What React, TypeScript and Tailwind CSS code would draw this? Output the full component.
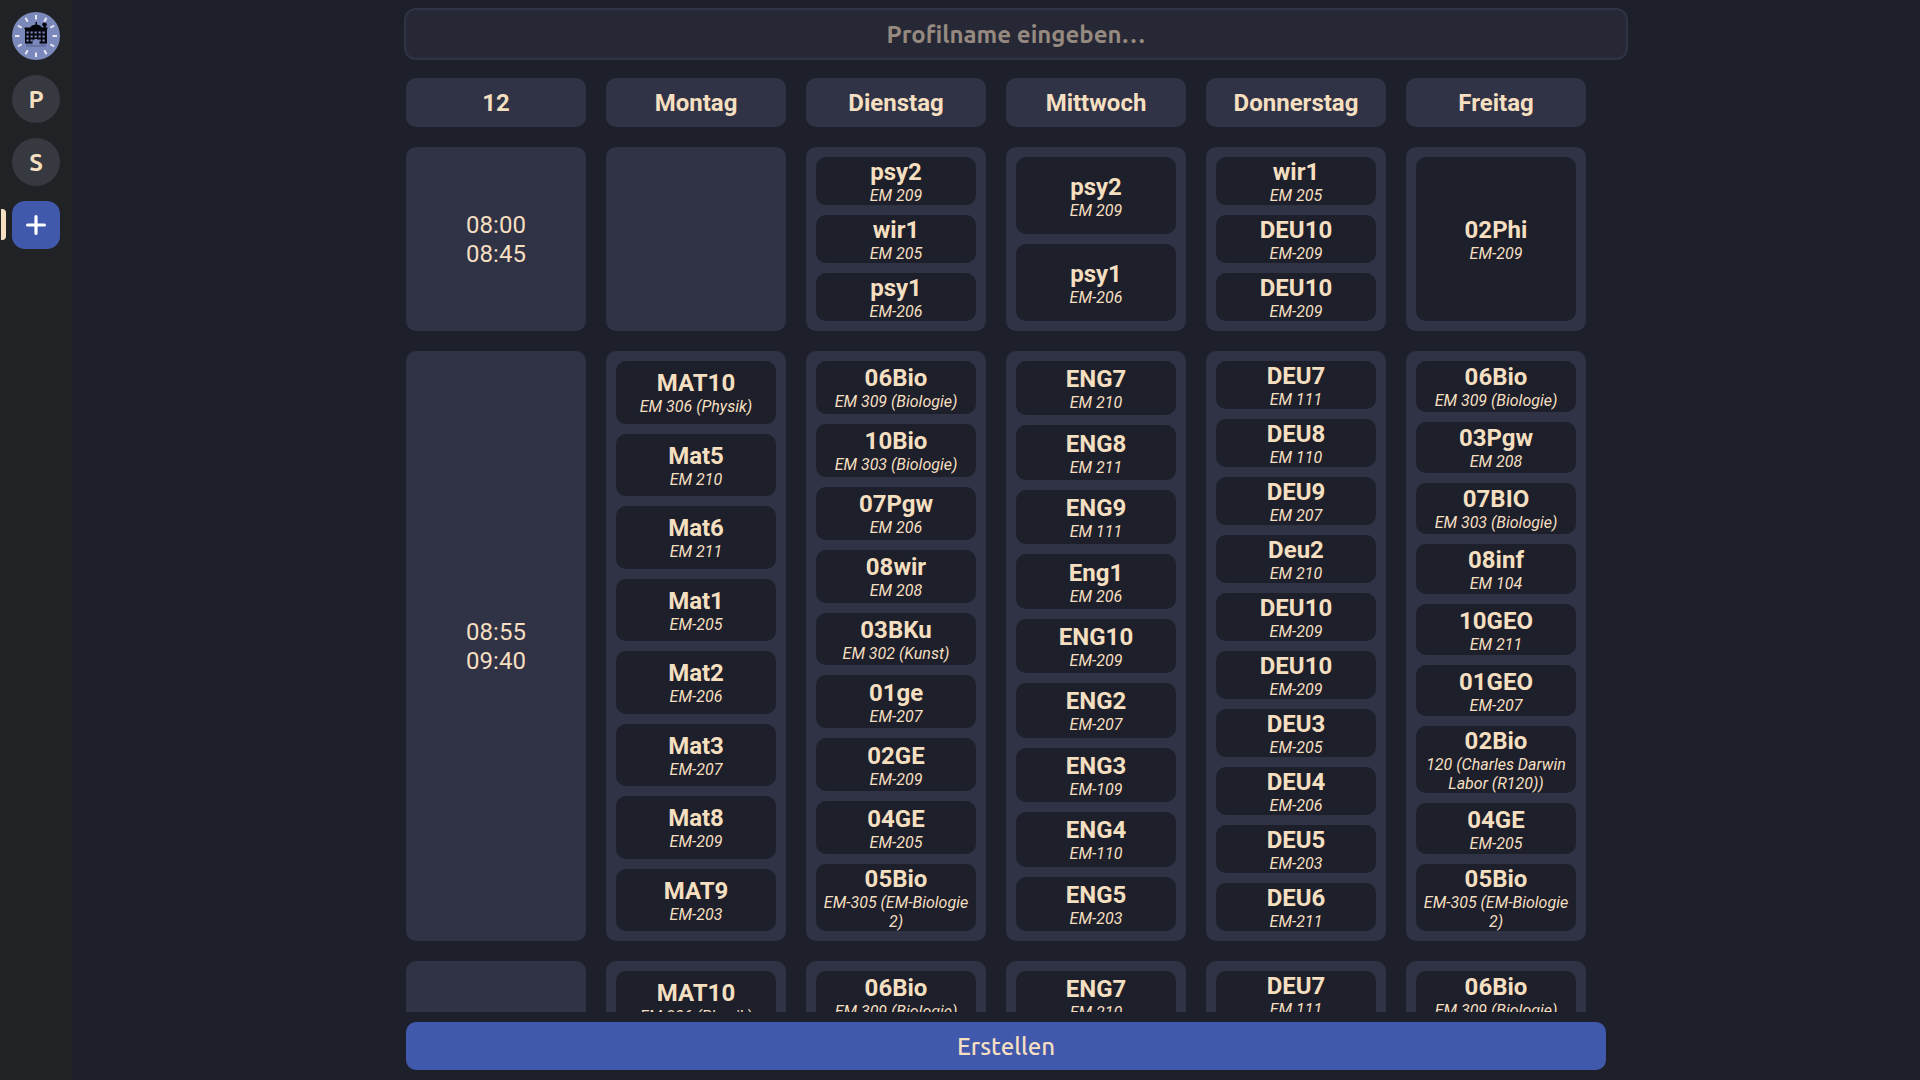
import React from "react";

type Course = [name: string, room: string];
type Slot = { times: string[]; days: Course[][] };

const DAYS = ["Montag", "Dienstag", "Mittwoch", "Donnerstag", "Freitag"];

const MAIN_COURSES: Course[][] = [
  [
    ["MAT10", "EM 306 (Physik)"],
    ["Mat5", "EM 210"],
    ["Mat6", "EM 211"],
    ["Mat1", "EM-205"],
    ["Mat2", "EM-206"],
    ["Mat3", "EM-207"],
    ["Mat8", "EM-209"],
    ["MAT9", "EM-203"],
  ],
  [
    ["06Bio", "EM 309 (Biologie)"],
    ["10Bio", "EM 303 (Biologie)"],
    ["07Pgw", "EM 206"],
    ["08wir", "EM 208"],
    ["03BKu", "EM 302 (Kunst)"],
    ["01ge", "EM-207"],
    ["02GE", "EM-209"],
    ["04GE", "EM-205"],
    ["05Bio", "EM-305 (EM-Biologie 2)"],
  ],
  [
    ["ENG7", "EM 210"],
    ["ENG8", "EM 211"],
    ["ENG9", "EM 111"],
    ["Eng1", "EM 206"],
    ["ENG10", "EM-209"],
    ["ENG2", "EM-207"],
    ["ENG3", "EM-109"],
    ["ENG4", "EM-110"],
    ["ENG5", "EM-203"],
  ],
  [
    ["DEU7", "EM 111"],
    ["DEU8", "EM 110"],
    ["DEU9", "EM 207"],
    ["Deu2", "EM 210"],
    ["DEU10", "EM-209"],
    ["DEU10", "EM-209"],
    ["DEU3", "EM-205"],
    ["DEU4", "EM-206"],
    ["DEU5", "EM-203"],
    ["DEU6", "EM-211"],
  ],
  [
    ["06Bio", "EM 309 (Biologie)"],
    ["03Pgw", "EM 208"],
    ["07BIO", "EM 303 (Biologie)"],
    ["08inf", "EM 104"],
    ["10GEO", "EM 211"],
    ["01GEO", "EM-207"],
    ["02Bio", "120 (Charles Darwin Labor (R120))"],
    ["04GE", "EM-205"],
    ["05Bio", "EM-305 (EM-Biologie 2)"],
  ],
];

const SLOTS: Slot[] = [
  {
    times: ["08:00", "08:45"],
    days: [
      [],
      [
        ["psy2", "EM 209"],
        ["wir1", "EM 205"],
        ["psy1", "EM-206"],
      ],
      [
        ["psy2", "EM 209"],
        ["psy1", "EM-206"],
      ],
      [
        ["wir1", "EM 205"],
        ["DEU10", "EM-209"],
        ["DEU10", "EM-209"],
      ],
      [["02Phi", "EM-209"]],
    ],
  },
  { times: ["08:55", "09:40"], days: MAIN_COURSES },
  { times: [], days: MAIN_COURSES },
];

const TICKS = [0, 30, 60, 90, 120, 150, 180, 210, 240, 270, 300, 330];
const WINDOW_ROWS = [20, 24, 28];
const WINDOW_COLUMNS = [14.5, 18.5, 22.5, 26.5, 30.5];

function Logo() {
  return (
    <svg viewBox="0 0 48 48" className="size-12" aria-hidden="true">
      <circle cx="24" cy="24" r="24" fill="#7b88bb" />
      {TICKS.map((angle) => (
        <rect
          key={angle}
          x="23"
          y="3"
          width="2"
          height="4.5"
          fill="#e8eaf3"
          transform={`rotate(${angle} 24 24)`}
        />
      ))}
      <path d="M14 31H34V35H14Z" fill="#6672a3" />
      <path
        d="M12.5 15.5H18L20 13.5L23.5 12.5V10H25V12.5L28 13.5L30 15.5H31.5V14.5C29.5 13.5 29.8 10.5 32.5 10.5S35.5 13.5 33.8 14.5V15.5H35.5V17H35V31.5H13V17H12.5Z"
        fill="#05060d"
      />
      {WINDOW_ROWS.map((y) =>
        WINDOW_COLUMNS.map((x) => (
          <rect key={`${x}-${y}`} x={x} y={y - 0.5} width="2.2" height="2" fill="#7b88bb" />
        )),
      )}
      <path d="M20.5 33V30.5C20.5 28.5 22 27 24 27S27.5 28.5 27.5 30.5V33Z" fill="#7b88bb" />
    </svg>
  );
}

function ProfileButton({ letter }: { letter: string }) {
  return (
    <button
      type="button"
      className="flex size-12 items-center justify-center rounded-full bg-[#36393f] text-2xl leading-[27px] font-bold"
    >
      {letter}
    </button>
  );
}

function Sidebar() {
  return (
    <nav className="flex w-[72px] shrink-0 flex-col items-center gap-[15px] bg-[#202225] pt-3">
      <button type="button" aria-label="Startseite" className="size-12 rounded-full">
        <Logo />
      </button>
      <ProfileButton letter="P" />
      <ProfileButton letter="S" />
      <div className="relative flex w-full justify-center">
        <span className="absolute top-2 left-px h-[31px] w-[5px] rounded-r bg-[#f5dfc1]" />
        <button
          type="button"
          aria-label="Neues Profil"
          className="flex size-12 items-center justify-center rounded-[13px] bg-[#4059ad]"
        >
          <svg viewBox="0 0 20 20" className="size-5" aria-hidden="true">
            <path d="M10 1.6V18.4M1.6 10H18.4" stroke="#fff" strokeWidth="3.2" strokeLinecap="round" />
          </svg>
        </button>
      </div>
    </nav>
  );
}

function CourseButton({ course: [name, room] }: { course: Course }) {
  return (
    <button
      type="button"
      className="flex min-h-min w-full flex-1 flex-col items-center justify-center rounded-[10px] bg-[#1d1f2a]"
    >
      <span className="-mb-px text-2xl leading-[30px] font-bold">{name}</span>
      <span className="text-base leading-[19px] italic">{room}</span>
    </button>
  );
}

function Timetable() {
  return (
    <table className="grid grid-cols-6 gap-5 pr-5 font-[Roboto,sans-serif]">
      <thead className="contents">
        <tr className="contents">
          {["12", ...DAYS].map((title) => (
            <th
              key={title}
              scope="col"
              className="rounded-[10px] bg-[#303245] pt-2.5 pb-[9px] text-2xl leading-[30px] font-bold"
            >
              {title}
            </th>
          ))}
        </tr>
      </thead>
      <tbody className="contents">
        {SLOTS.map((slot, row) => (
          <tr key={row} className="contents">
            <th
              scope="row"
              className="flex flex-col items-center justify-center rounded-[10px] bg-[#303245] pt-0.5 text-2xl leading-[29px] font-normal"
            >
              {slot.times.map((time) => (
                <time key={time}>{time}</time>
              ))}
            </th>
            {slot.days.map((courses, day) => (
              <td key={day} className="flex flex-col gap-2.5 rounded-[10px] bg-[#303245] p-2.5">
                {courses.map((course, index) => (
                  <CourseButton key={index} course={course} />
                ))}
              </td>
            ))}
          </tr>
        ))}
      </tbody>
    </table>
  );
}

export default function App() {
  return (
    <div className="flex h-screen bg-[#1d1f2a] font-[Ubuntu,'Noto_Sans',sans-serif] text-[#f5dfc1]">
      <Sidebar />
      <main className="flex min-w-0 flex-1 justify-center pl-5">
        <form
          className="flex min-h-0 w-full max-w-[1200px] flex-col pt-2 pb-2.5"
          onSubmit={(event) => event.preventDefault()}
        >
          <div className="-mr-[22px] -ml-0.5 flex">
            <input
              type="text"
              aria-label="Profilname"
              placeholder="Profilname eingeben…"
              className="h-[52px] min-w-0 flex-1 rounded-xl border-2 border-[#303245] bg-[#262836] text-center text-2xl font-bold placeholder:text-[#968a80]"
            />
          </div>
          <div className="mt-[18px] min-h-0 flex-1 overflow-y-auto [scrollbar-width:none]">
            <Timetable />
          </div>
          <button
            type="submit"
            className="mt-2.5 h-12 shrink-0 rounded-[10px] bg-[#4059ad] text-2xl leading-[27px] font-medium"
          >
            Erstellen
          </button>
        </form>
      </main>
    </div>
  );
}
